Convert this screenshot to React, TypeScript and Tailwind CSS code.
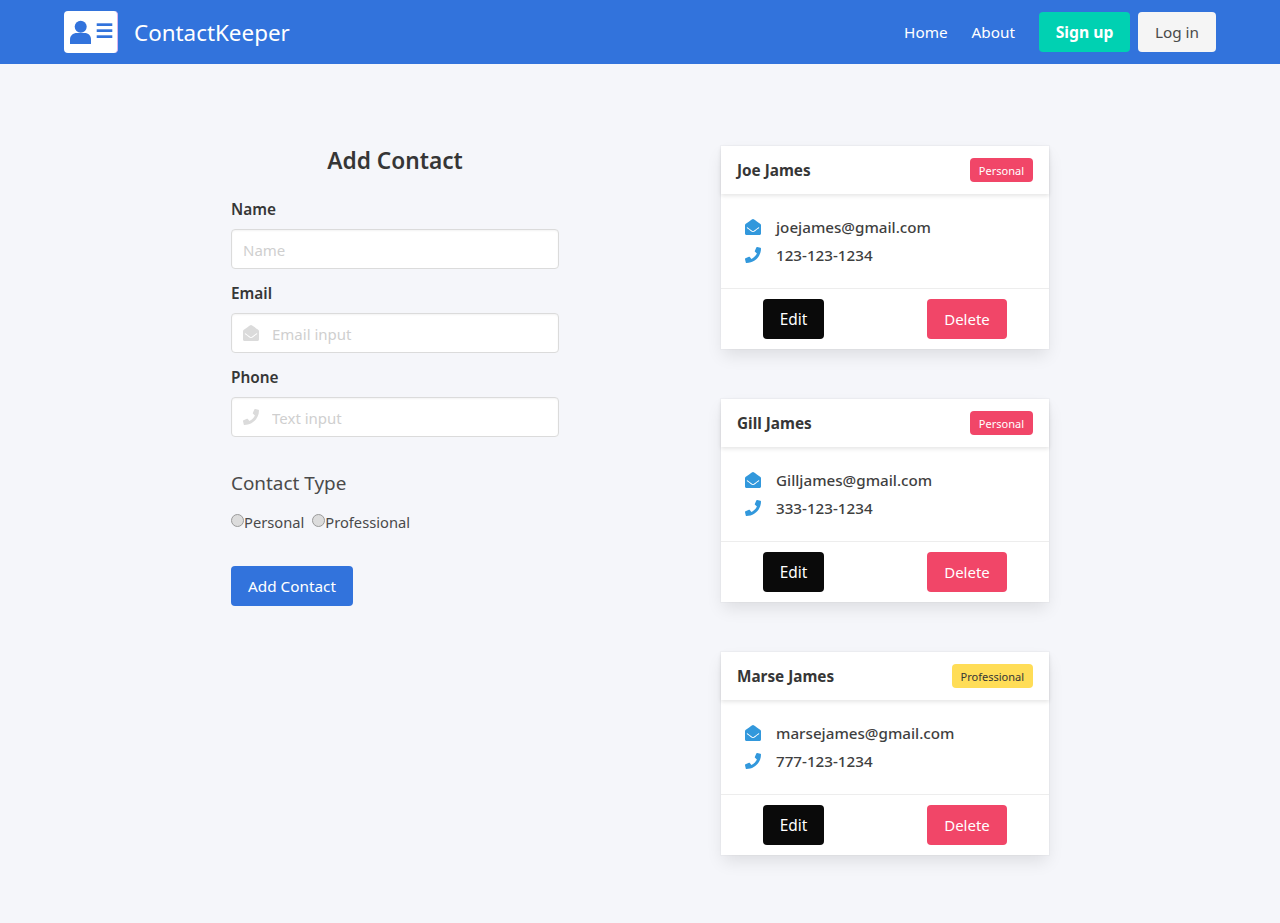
import { FaEnvelopeOpen, FaPhone } from 'react-icons/fa';

type Contact = {
    name: string;
    email: string;
    phone: string;
    type: 'Personal' | 'Professional';
};

const contacts: Contact[] = [
    { name: 'Joe James', email: 'joejames@gmail.com', phone: '123-123-1234', type: 'Personal' },
    { name: 'Gill James', email: 'Gilljames@gmail.com', phone: '333-123-1234', type: 'Personal' },
    { name: 'Marse James', email: 'marsejames@gmail.com', phone: '777-123-1234', type: 'Professional' },
];

function Logo() {
    return (
        <div className="w-[54px] h-[42px] bg-white rounded-[4px] border-r border-[#d9b3ee]">
            <svg width="53" height="42" viewBox="0 0 53 42" fill="#3273dc">
                <circle cx="16.7" cy="15.7" r="6" />
                <path d="M6 33v-4.500C6 24.500 9 22 13 22h7.500c3.800 0 6.500 2.500 6.500 6.500V33z" />
                <rect x="32.700" y="12.300" width="15.600" height="2.700" />
                <rect x="32.700" y="18.300" width="15.600" height="2.700" />
                <rect x="32.700" y="24.300" width="15.600" height="2.700" />
            </svg>
        </div>
    );
}

function Field({ label, placeholder, icon }: { label: string; placeholder: string; icon?: React.ReactNode }) {
    return (
        <div className="mb-[12px]">
            <label className="block text-[15.400px] leading-[24px] font-semibold text-[#363636] pt-[1px] mb-[7px]">{label}</label>
            <div className="relative">
                {icon && (
                    <span className="absolute left-[12px] top-[12px] text-[#dbdbdb]">{icon}</span>
                )}
                <input
                    placeholder={placeholder}
                    className={`w-full h-[40px] pt-[2px] bg-white border border-[#dbdbdb] rounded-[4px] text-[15px] text-[#363636] placeholder:text-[#cfcfcf] shadow-[inset_0_1px_2px_rgba(10,10,10,0.05)] ${icon ? 'pl-[40px]' : 'pl-[11px]'}`}
                />
            </div>
        </div>
    );
}

function Radio({ label }: { label: string }) {
    return (
        <label className="flex items-center text-[14.700px] leading-[24px] text-[#4a4a4a]">
            <input
                type="radio"
                name="type"
                className="appearance-none w-[13px] h-[13px] rounded-full border border-[#9a9a9a] bg-[#dcdcdc] -mt-[3px]"
            />
            {label}
        </label>
    );
}

function ContactCard({ contact }: { contact: Contact }) {
    const personal = contact.type === 'Personal';
    return (
        <div className="bg-white shadow-[0_8px_16px_-2px_rgba(10,10,10,0.1),0_0_0_1px_rgba(10,10,10,0.02)] h-[203px] flex flex-col">
            <div className="h-[48px] shrink-0 px-[16px] flex items-center justify-between shadow-[0_2px_4px_rgba(10,10,10,0.1)]">
                <span className="text-[15.300px] leading-[24px] font-bold text-[#363636]">{contact.name}</span>
                <span
                    className={`h-[24px] pt-[2px] px-[9px] rounded-[4px] text-[11px] flex items-center ${personal ? 'bg-[#f14668] text-white' : 'bg-[#ffdd57] text-[#363636]'}`}
                >
                    {contact.type}
                </span>
            </div>
            <div className="flex-1 px-[24px] pt-[19px]">
                <div className="flex items-center h-[28px] text-[15.200px] font-medium text-[#3f3f3f]">
                    <FaEnvelopeOpen className="w-[16px] h-[16px] text-[#3298dc] mr-[15px]" />
                    {contact.email}
                </div>
                <div className="flex items-center h-[28px] text-[15.200px] font-medium text-[#3f3f3f]">
                    <FaPhone className="w-[16px] h-[16px] text-[#3298dc] mr-[15px]" />
                    {contact.phone}
                </div>
            </div>
            <div className="h-[61px] shrink-0 border-t border-[#ededed] px-[42px] flex items-center justify-between">
                <button className="w-[61px] h-[40px] pt-[2px] bg-[#0a0a0a] text-white text-[15.400px] rounded-[4px]">Edit</button>
                <button className="w-[80px] h-[40px] bg-[#f14668] text-white text-[15px] rounded-[4px]">Delete</button>
            </div>
        </div>
    );
}

export default function App() {
    return (
        <div className="min-h-[923px] bg-[#f5f6fa] font-['Noto_Sans','Open_Sans',sans-serif]">
            <nav className="h-[64px] bg-[#3273dc] px-[64px] flex items-center justify-between">
                <div className="flex items-center gap-[16px]">
                    <Logo />
                    <span className="text-[22.400px] text-white pt-[1px]">ContactKeeper</span>
                </div>
                <div className="flex items-center text-[15.300px] text-white">
                    <a className="mr-[24px]">Home</a>
                    <a className="mr-[24px]">About</a>
                    <button className="w-[91px] h-[40px] pt-[2px] bg-[#00d1b2] rounded-[4px] font-bold text-[15.700px] mr-[8px]">Sign up</button>
                    <button className="w-[78px] h-[40px] bg-[#f5f5f5] rounded-[4px] text-[#4a4a4a]">Log in</button>
                </div>
            </nav>
            <main className="flex justify-center gap-[162px] pt-[82px]">
                <div className="w-[328px]">
                    <h2 className="text-center text-[22.700px] leading-[30px] font-semibold text-[#363636] mb-[21px]">Add Contact</h2>
                    <Field label="Name" placeholder="Name" />
                    <Field
                        label="Email"
                        placeholder="Email input"
                        icon={<FaEnvelopeOpen className="w-[16px] h-[16px]" />}
                    />
                    <Field
                        label="Phone"
                        placeholder="Text input"
                        icon={<FaPhone className="w-[16px] h-[16px]" />}
                    />
                    <h3 className="text-[18.900px] leading-[30px] text-[#4a4a4a] mt-[31px]">Contact Type</h3>
                    <div className="flex gap-[8px] mt-[12px]">
                        <Radio label="Personal" />
                        <Radio label="Professional" />
                    </div>
                    <button className="mt-[32px] w-[122px] h-[40px] bg-[#3273dc] text-white text-[15.300px] rounded-[4px]">Add Contact</button>
                </div>
                <div className="w-[328px] flex flex-col gap-[50px]">
                    {contacts.map((c) => (
                        <ContactCard key={c.name} contact={c} />
                    ))}
                </div>
            </main>
        </div>
    );
}
